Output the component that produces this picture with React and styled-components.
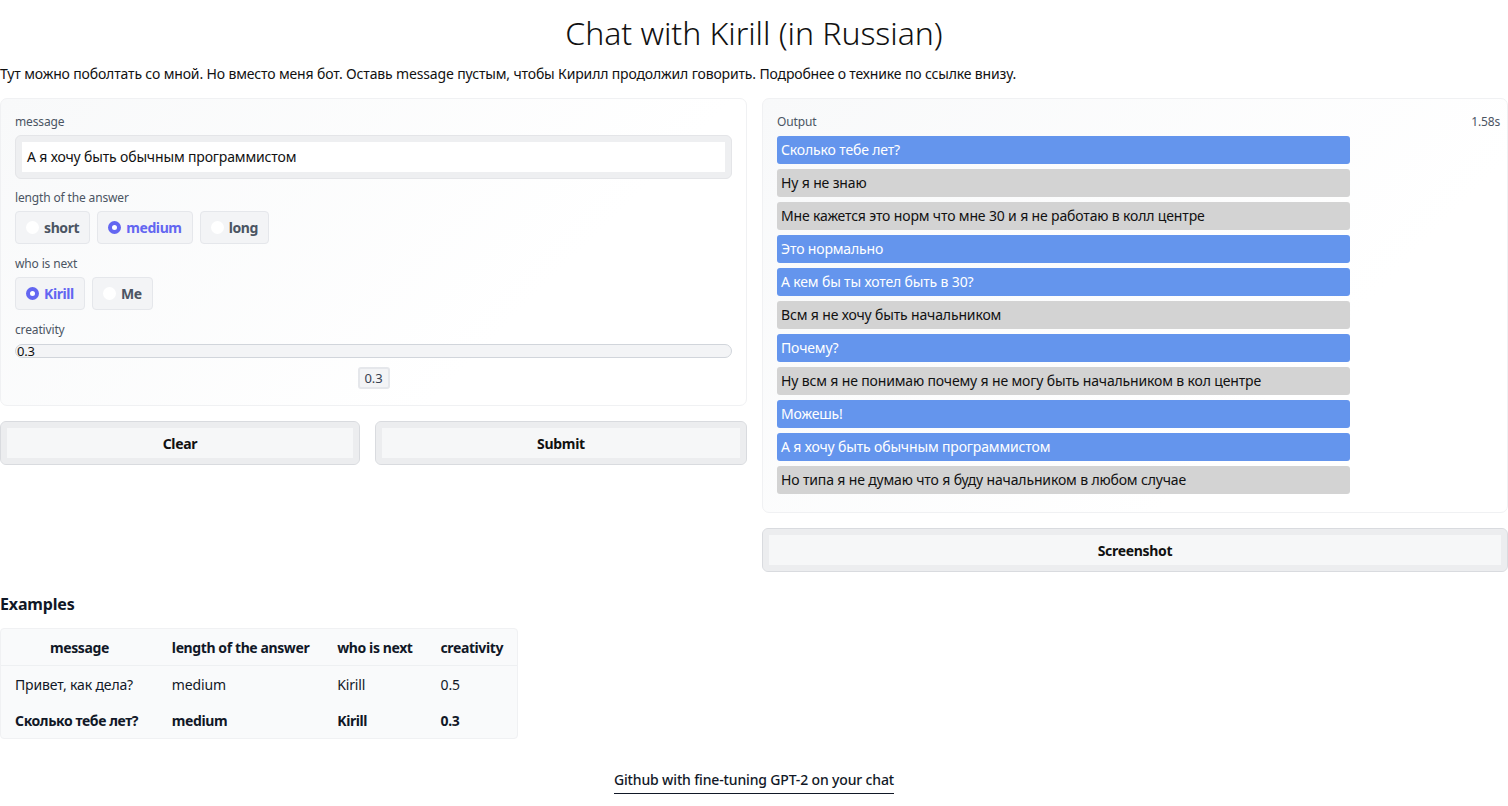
import React from "react";
import styled, { createGlobalStyle } from "styled-components";

const GlobalStyle = createGlobalStyle`
  body {
    margin: 0;
    background: #fff;
    font-family: "Noto Sans", "Open Sans", sans-serif;
    color: #111827;
    letter-spacing: -0.15px;
  }
  * { box-sizing: border-box; }
`;

const Page = styled.div`
  width: 1508px;
  padding: 0 0 12px;
`;

const Title = styled.h1`
  margin: 0;
  padding-top: 13px;
  text-align: center;
  font-size: 32px;
  font-weight: 300;
  line-height: 40px;
  letter-spacing: -0.05px;
  color: #111;
`;

const Description = styled.p`
  margin: 11px 0 14px;
  font-size: 14px;
  line-height: 20px;
  color: #111;
`;

const Columns = styled.div`
  display: grid;
  grid-template-columns: 747px 746px;
  gap: 15px;
  align-items: start;
`;

const Column = styled.div`
  display: flex;
  flex-direction: column;
  gap: 15px;
`;

const Panel = styled.div`
  border: 1px solid #f0f1f3;
  border-radius: 7px;
  background: linear-gradient(135deg, #f8f9fa 0%, #ffffff 70%);
  padding: 15px 14px ${(p) => p.$bottom || 15}px;
  display: flex;
  flex-direction: column;
`;

const Label = styled.div`
  font-size: 12px;
  line-height: 16px;
  color: #4b5563;
  margin-bottom: 5px;
  display: flex;
  justify-content: space-between;
`;

const Timing = styled.span`
  margin-right: -7px;
`;

const Field = styled.div`
  margin-bottom: ${(p) => p.$gap || 10}px;
`;

const InputShell = styled.div`
  background: #eeeff1;
  border: 1px solid #e4e5e8;
  border-radius: 6px;
  padding: 6px;
`;

const TextInput = styled.div`
  background: #fff;
  height: 30px;
  padding: 0 5px;
  font-size: 14px;
  line-height: 30px;
  color: #111;
`;

const RadioRow = styled.div`
  display: flex;
  gap: 7px;
  margin-top: 4px;
`;

const RadioOption = styled.div`
  display: flex;
  align-items: center;
  gap: 5px;
  height: 33px;
  padding: 0 10px;
  border: 1px solid #e5e7eb;
  border-radius: 4px;
  background: #f3f4f6;
  font-size: 14px;
  font-weight: 700;
  letter-spacing: -0.4px;
  color: ${(p) => (p.$checked ? "#6366f1" : "#4b5563")};
`;

const RadioDot = styled.span`
  width: 13px;
  height: 13px;
  border-radius: 50%;
  background: #fff;
  border: ${(p) => (p.$checked ? "4px solid #6366f1" : "none")};
  flex: none;
`;

const SliderTrack = styled.div`
  height: 14px;
  margin-top: 1px;
  border: 1px solid #d1d5db;
  border-radius: 7px;
  background: #f3f4f6;
  font-size: 13px;
  line-height: 12px;
  padding-left: 1px;
  color: #111;
`;

const NumberBox = styled.div`
  align-self: center;
  margin-top: 9px;
  width: 32px;
  height: 22px;
  border: 2px solid #e5e7eb;
  border-radius: 3px;
  background: #f3f4f6;
  font-size: 13px;
  line-height: 18px;
  text-align: center;
  color: #374151;
`;

const ButtonRow = styled.div`
  display: grid;
  grid-template-columns: 360px 372px;
  gap: 15px;
`;

const Button = styled.button`
  height: 44px;
  border: 1px solid #d9dbdf;
  border-radius: 6px;
  background: #f6f7f8;
  box-shadow: inset 0 0 0 6px #ecedef;
  font-family: inherit;
  font-size: 14px;
  font-weight: 700;
  letter-spacing: -0.3px;
  color: #111;
  cursor: pointer;
`;

const ChatList = styled.div`
  display: flex;
  flex-direction: column;
  gap: 5px;
  width: 573px;
  margin-top: 1px;
`;

const Bubble = styled.div`
  height: 28px;
  border-radius: 3px;
  padding: 0 4px;
  font-size: 14px;
  line-height: 28px;
  background: ${(p) => (p.$user ? "#6495ed" : "#d3d3d3")};
  color: ${(p) => (p.$user ? "#fff" : "#111")};
`;

const Heading = styled.h3`
  margin: 22px 0 14px;
  font-size: 16px;
  line-height: 20px;
  font-weight: 700;
`;

const Table = styled.table`
  border-collapse: separate;
  border-spacing: 0;
  background: #f9fafb;
  border: 1px solid #f0f1f3;
  border-radius: 4px;
  font-size: 14px;

  th {
    font-weight: 700;
    height: 37px;
    padding: 0 14px;
    border-bottom: 1px solid #eef0f2;
    white-space: nowrap;
    letter-spacing: -0.4px;
  }
  th:first-child { text-align: center; padding: 0 49px; }
  th:not(:first-child) { text-align: left; }
  td {
    height: 36px;
    padding: 0 14px;
    white-space: nowrap;
  }
`;

const Row = styled.tr`
  font-weight: ${(p) => (p.$active ? 700 : 400)};
  letter-spacing: ${(p) => (p.$active ? "-0.4px" : "-0.15px")};
`;

const Footer = styled.div`
  display: flex;
  justify-content: center;
  margin-top: 31px;
`;

const FooterLink = styled.a`
  font-size: 14px;
  font-weight: 500;
  color: #111827;
  text-decoration: none;
  border-bottom: 1px solid #111827;
  padding-bottom: 3px;
  line-height: 20px;
`;

const messages = [
  [true, "Сколько тебе лет?"],
  [false, "Ну я не знаю"],
  [false, "Мне кажется это норм что мне 30 и я не работаю в колл центре"],
  [true, "Это нормально"],
  [true, "А кем бы ты хотел быть в 30?"],
  [false, "Всм я не хочу быть начальником"],
  [true, "Почему?"],
  [false, "Ну всм я не понимаю почему я не могу быть начальником в кол центре"],
  [true, "Можешь!"],
  [true, "А я хочу быть обычным программистом"],
  [false, "Но типа я не думаю что я буду начальником в любом случае"],
];

const Radio = ({ label, checked }) => (
  <RadioOption $checked={checked}>
    <RadioDot $checked={checked} />
    {label}
  </RadioOption>
);

export default function App() {
  return (
    <Page>
      <GlobalStyle />
      <Title>Chat with Kirill (in Russian)</Title>
      <Description>
        Тут можно поболтать со мной. Но вместо меня бот. Оставь message пустым, чтобы Кирилл
        продолжил говорить. Подробнее о технике по ссылке внизу.
      </Description>
      <Columns>
        <Column>
          <Panel $bottom={16}>
            <Field $gap={11}>
              <Label>message</Label>
              <InputShell>
                <TextInput>А я хочу быть обычным программистом</TextInput>
              </InputShell>
            </Field>
            <Field $gap={12}>
              <Label>length of the answer</Label>
              <RadioRow>
                <Radio label="short" />
                <Radio label="medium" checked />
                <Radio label="long" />
              </RadioRow>
            </Field>
            <Field $gap={12}>
              <Label>who is next</Label>
              <RadioRow>
                <Radio label="Kirill" checked />
                <Radio label="Me" />
              </RadioRow>
            </Field>
            <Label>creativity</Label>
            <SliderTrack>0.3</SliderTrack>
            <NumberBox>0.3</NumberBox>
          </Panel>
          <ButtonRow>
            <Button>Clear</Button>
            <Button>Submit</Button>
          </ButtonRow>
        </Column>
        <Column>
          <Panel $bottom={18}>
            <Label>
              <span>Output</span>
              <Timing>1.58s</Timing>
            </Label>
            <ChatList>
              {messages.map(([user, text], i) => (
                <Bubble key={i} $user={user}>
                  {text}
                </Bubble>
              ))}
            </ChatList>
          </Panel>
          <Button>Screenshot</Button>
        </Column>
      </Columns>
      <Heading>Examples</Heading>
      <Table>
        <thead>
          <tr>
            <th>message</th>
            <th>length of the answer</th>
            <th>who is next</th>
            <th>creativity</th>
          </tr>
        </thead>
        <tbody>
          <Row>
            <td>Привет, как дела?</td>
            <td>medium</td>
            <td>Kirill</td>
            <td>0.5</td>
          </Row>
          <Row $active>
            <td>Сколько тебе лет?</td>
            <td>medium</td>
            <td>Kirill</td>
            <td>0.3</td>
          </Row>
        </tbody>
      </Table>
      <Footer>
        <FooterLink href="#">Github with fine-tuning GPT-2 on your chat</FooterLink>
      </Footer>
    </Page>
  );
}
